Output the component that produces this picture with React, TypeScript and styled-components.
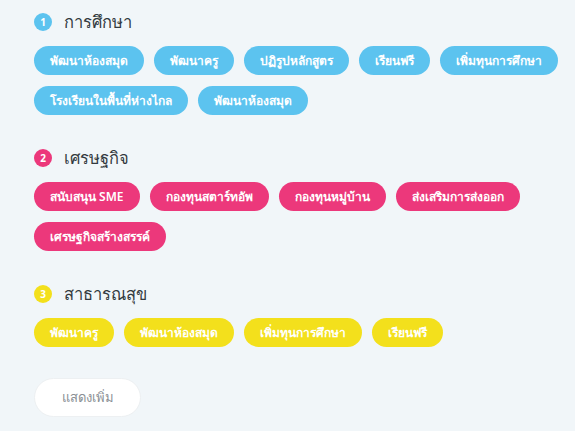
import styled, { createGlobalStyle } from "styled-components";

const GlobalStyle = createGlobalStyle`
  html, body {
    margin: 0;
    padding: 0;
    background: #f1f6f9;
  }
  body {
    font-family: "Noto Sans", "Liberation Sans", sans-serif;
  }
`;

type Tone = "blue" | "pink" | "yellow";

const toneColor: Record<Tone, string> = {
  blue: "#5cc3ef",
  pink: "#ec387b",
  yellow: "#f3e01c",
};

const categories: { title: string; tone: Tone; tags: string[] }[] = [
  {
    title: "การศึกษา",
    tone: "blue",
    tags: [
      "พัฒนาห้องสมุด",
      "พัฒนาครู",
      "ปฏิรูปหลักสูตร",
      "เรียนฟรี",
      "เพิ่มทุนการศึกษา",
      "โรงเรียนในพื้นที่ห่างไกล",
      "พัฒนาห้องสมุด",
    ],
  },
  {
    title: "เศรษฐกิจ",
    tone: "pink",
    tags: [
      "สนับสนุน SME",
      "กองทุนสตาร์ทอัพ",
      "กองทุนหมู่บ้าน",
      "ส่งเสริมการส่งออก",
      "เศรษฐกิจสร้างสรรค์",
    ],
  },
  {
    title: "สาธารณสุข",
    tone: "yellow",
    tags: ["พัฒนาครู", "พัฒนาห้องสมุด", "เพิ่มทุนการศึกษา", "เรียนฟรี"],
  },
];

const Page = styled.main`
  display: flex;
  flex-direction: column;
  gap: 31px;
  padding: 10px 12px 14px 34px;
`;

const Section = styled.section`
  display: flex;
  flex-direction: column;
  gap: 12px;
`;

const Heading = styled.h2`
  display: flex;
  align-items: center;
  gap: 12px;
  margin: 0;
  height: 24px;
  font-size: 16.5px;
  font-weight: 400;
  color: #333a40;
`;

const Badge = styled.span<{ $tone: Tone }>`
  display: inline-flex;
  align-items: center;
  justify-content: center;
  width: 18px;
  height: 18px;
  border-radius: 50%;
  background: ${(p) => toneColor[p.$tone]};
  color: #fff;
  font-size: 10px;
  font-weight: 700;
`;

const TagList = styled.div`
  display: flex;
  flex-wrap: wrap;
  gap: 11px 10px;
`;

const Tag = styled.span<{ $tone: Tone }>`
  display: inline-flex;
  align-items: center;
  height: 29px;
  padding: 0 16px;
  border-radius: 15px;
  background: ${(p) => toneColor[p.$tone]};
  color: #fff;
  font-size: 12px;
  font-weight: 600;
  white-space: nowrap;
`;

const MoreButton = styled.button`
  align-self: flex-start;
  width: 107px;
  height: 39px;
  border: 1px solid #edf0f2;
  border-radius: 20px;
  background: #fff;
  color: #8a8f94;
  font-family: inherit;
  font-size: 13px;
  cursor: pointer;
`;

export default function App() {
  return (
    <>
      <GlobalStyle />
      <Page>
        {categories.map((cat, i) => (
          <Section key={cat.title}>
            <Heading>
              <Badge $tone={cat.tone}>{i + 1}</Badge>
              {cat.title}
            </Heading>
            <TagList>
              {cat.tags.map((tag, j) => (
                <Tag key={j} $tone={cat.tone}>
                  {tag}
                </Tag>
              ))}
            </TagList>
          </Section>
        ))}
        <MoreButton>แสดงเพิ่ม</MoreButton>
      </Page>
    </>
  );
}
